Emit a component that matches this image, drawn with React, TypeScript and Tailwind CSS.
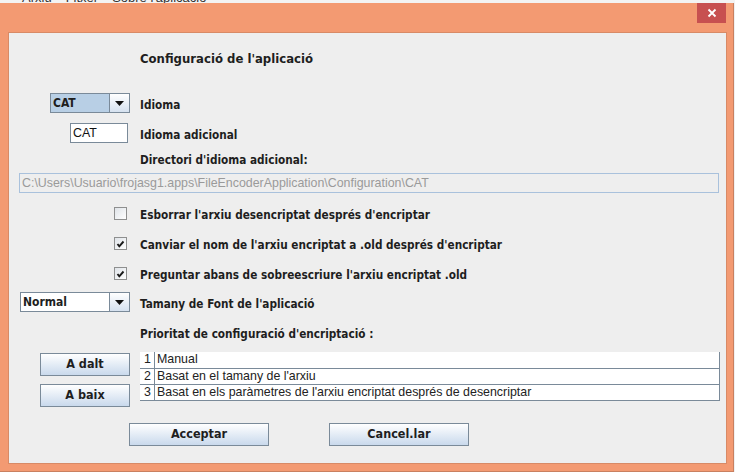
import React from "react";

const label = "font-['DejaVu_Sans_Condensed','DejaVu_Sans',sans-serif] font-bold text-[11.7px] text-[#1e1e1e]";
const plain = "font-['Liberation_Sans',Arial,sans-serif] text-[12.4px]";

const Arrow = () => (
  <div className="w-[20px] h-full flex items-center justify-center border-l border-[#7a8a99] bg-gradient-to-b from-[#ffffff] to-[#d5e1ef]">
    <svg width="9" height="5" viewBox="0 0 9 5">
      <path d="M0 0 H9 L4.5 5 Z" fill="#111" />
    </svg>
  </div>
);

const Combo = ({ text, width, selected }: { text: string; width: string; selected?: boolean }) => (
  <div className={`${width} h-[20px] flex border border-[#7a8a99]`}>
    <div
      className={`flex-1 flex items-center pl-[2px] ${label} text-[12px] ${
        selected ? "bg-[#b8cfe5]" : "bg-white"
      }`}
    >
      {text}
    </div>
    <Arrow />
  </div>
);

const Check = ({ checked }: { checked?: boolean }) => (
  <div className="w-[13px] h-[13px] border border-[#8e8f8f] bg-gradient-to-br from-[#dfe3e8] to-[#ffffff] flex items-center justify-center">
    {checked && (
      <svg width="9" height="9" viewBox="0 0 9 9">
        <path d="M1.5 5 L3.3 7.3 L7.5 2.5" stroke="#1a1a1a" strokeWidth="1.9" fill="none" />
      </svg>
    )}
  </div>
);

const Row = ({ left, children, className = "" }: { left?: React.ReactNode; children?: React.ReactNode; className?: string }) => (
  <div className={`flex items-center ${className}`}>
    <div className="w-[121px] flex justify-end">{left}</div>
    <div className="ml-[10px] flex-1">{children}</div>
  </div>
);

const Btn = ({ text, className = "" }: { text: string; className?: string }) => (
  <button
    className={`border border-[#7a8a99] bg-gradient-to-b from-[#ffffff] to-[#c9d9ec] flex items-center justify-center ${label} text-[12.5px] ${className}`}
  >
    {text}
  </button>
);

const rows = [
  "Manual",
  "Basat en el tamany de l'arxiu",
  "Basat en els paràmetres de l'arxiu encriptat després de desencriptar",
];

export default function App() {
  return (
    <div className="w-[735px] h-[472px] bg-[#f0f0f0] overflow-hidden relative">
      {/* window behind */}
      <div className="h-[3px] overflow-hidden bg-[#f3f3f3]">
        <div className={`${plain} text-[13px] text-[#333] pl-[22px] -mt-[12px] flex gap-[14px]`}>
          <span>Arxiu</span>
          <span>Fitxer</span>
          <span>Sobre l'aplicació</span>
        </div>
      </div>

      {/* dialog frame */}
      <div className="w-[734px] h-[469px] bg-[#f39a72] border-r border-b border-[#c98060] flex flex-col">
        <div className="h-[29px] flex justify-end pr-[7px]">
          <div className="w-[29px] h-[20px] bg-[#c75050] flex items-center justify-center">
            <svg width="10" height="10" viewBox="0 0 10 10">
              <path d="M1.5 1.5 L8.5 8.5 M8.5 1.5 L1.5 8.5" stroke="#fff" strokeWidth="1.8" />
            </svg>
          </div>
        </div>

        <div className="ml-[8px] w-[719px] h-[432px] bg-[#eeeeee] border border-[#d88a66] flex flex-col">
          {/* title */}
          <Row className="mt-[14px] h-[20px]">
            <span className={`${label} text-[13px]`}>Configuració de l'aplicació</span>
          </Row>

          <Row className="mt-[26px] h-[20px]" left={<Combo text="CAT" width="w-[80px]" selected />}>
            <span className={label}>Idioma</span>
          </Row>

          <Row
            className="mt-[10px] h-[20px]"
            left={
              <div className={`w-[58px] h-[20px] mr-[2px] bg-white border border-[#7a8a99] ${plain} text-[#111] flex items-center pl-[2px]`}>
                CAT
              </div>
            }
          >
            <span className={label}>Idioma adicional</span>
          </Row>

          <Row className="mt-[5px] h-[20px]">
            <span className={label}>Directori d'idioma adicional:</span>
          </Row>

          <div className="mt-[5px] ml-[10px] w-[700px] h-[20px] border border-[#a9c1dc] bg-[#eeeeee] flex items-center pl-[2px]">
            <span className={`${plain} text-[#9a9a9a]`}>
              C:\Users\Usuario\frojasg1.apps\FileEncoderApplication\Configuration\CAT
            </span>
          </div>

          <Row className="mt-[10px] h-[20px]" left={<div className="mr-[3px]"><Check /></div>}>
            <span className={label}>Esborrar l'arxiu desencriptat després d'encriptar</span>
          </Row>
          <Row className="mt-[10px] h-[20px]" left={<div className="mr-[3px]"><Check checked /></div>}>
            <span className={label}>Canviar el nom de l'arxiu encriptat a .old després d'encriptar</span>
          </Row>
          <Row className="mt-[10px] h-[20px]" left={<div className="mr-[3px]"><Check checked /></div>}>
            <span className={label}>Preguntar abans de sobreescriure l'arxiu encriptat .old</span>
          </Row>

          <Row className="mt-[9px] h-[20px]" left={<Combo text="Normal" width="w-[110px]" />}>
            <span className={label}>Tamany de Font de l'aplicació</span>
          </Row>

          <Row className="mt-[10px] h-[20px]">
            <span className={label}>Prioritat de configuració d'encriptació :</span>
          </Row>

          <div className="mt-[10px] flex items-start">
            <div className="w-[121px] flex flex-col items-end gap-[8px]">
              <Btn text="A dalt" className="w-[90px] h-[23px] mt-[1px]" />
              <Btn text="A baix" className="w-[90px] h-[23px]" />
            </div>
            <div className="ml-[10px] w-[580px] bg-white border-r border-b border-[#7a8a99]">
              {rows.map((r, i) => (
                <div
                  key={i}
                  className={`h-[16px] flex ${plain} text-[#222] ${i > 0 ? "border-t border-[#7a8a99]" : ""}`}
                >
                  <div className="w-[15px] pl-[4px] border-r border-[#7a8a99] leading-[15px]">{i + 1}</div>
                  <div className="pl-[2px] leading-[15px] whitespace-nowrap">{r}</div>
                </div>
              ))}
            </div>
          </div>

          <div className="mt-[16px] flex">
            <Btn text="Acceptar" className="ml-[120px] w-[140px] h-[23px]" />
            <Btn text="Cancel.lar" className="ml-[60px] w-[140px] h-[23px]" />
          </div>
        </div>
      </div>
    </div>
  );
}
